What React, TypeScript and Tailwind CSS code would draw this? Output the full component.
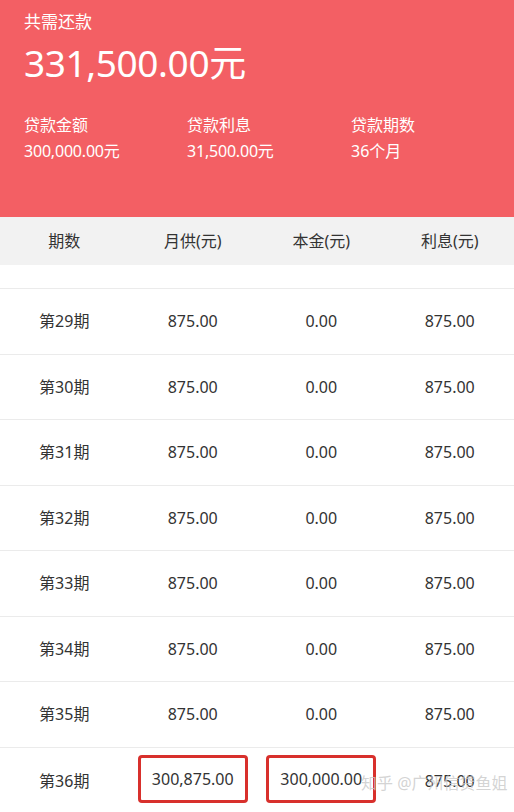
import React from "react";

const rows = [29, 30, 31, 32, 33, 34, 35];

function Cell({ children }: { children: React.ReactNode }) {
  return <div className="flex items-center justify-center">{children}</div>;
}

export default function App() {
  return (
    <div
      className="w-[514px] h-[812px] overflow-hidden bg-white text-[#333]"
      style={{ fontFamily: '"Noto Sans", "Noto Sans CJK SC", sans-serif' }}
    >
      {/* summary header */}
      <div className="h-[217px] bg-[#f35f64] text-white px-6 pt-[9px]">
        <div className="text-[17px] leading-[26px]">共需还款</div>
        <div className="text-[37px] leading-[48px] mt-[4px] tracking-[-0.4px]">331,500.00元</div>
        <div className="grid grid-cols-[163px_164px_1fr] mt-[25px] text-[16px] leading-[26px]">
          <div>
            <div>贷款金额</div>
            <div className="-tracking-[0.2px]">300,000.00元</div>
          </div>
          <div>
            <div>贷款利息</div>
            <div className="-tracking-[0.2px]">31,500.00元</div>
          </div>
          <div>
            <div>贷款期数</div>
            <div>36个月</div>
          </div>
        </div>
      </div>

      {/* table head */}
      <div className="grid grid-cols-4 h-[48px] bg-[#f2f2f2] text-[16px]">
        <Cell>期数</Cell>
        <Cell>月供(元)</Cell>
        <Cell>本金(元)</Cell>
        <Cell>利息(元)</Cell>
      </div>

      <div className="h-[24px] border-b border-[#ebebeb]" />

      {rows.map((n) => (
        <div key={n} className="grid grid-cols-4 h-[65.5px] border-b border-[#ebebeb] text-[16px]">
          <Cell>第{n}期</Cell>
          <Cell>875.00</Cell>
          <Cell>0.00</Cell>
          <Cell>875.00</Cell>
        </div>
      ))}

      <div className="relative grid grid-cols-4 h-[66px] text-[16px]">
        <Cell>第36期</Cell>
        <Cell>
          <span className="-mt-[3px] px-[11px] py-[9px] border-[3px] border-[#d8302c] rounded-[4px]">300,875.00</span>
        </Cell>
        <Cell>
          <span className="-mt-[3px] px-[11px] py-[9px] border-[3px] border-[#d8302c] rounded-[4px]">300,000.00</span>
        </Cell>
        <Cell>875.00</Cell>
        <div className="absolute left-[361px] top-[23px] text-[16px] text-[#c9c9c9]/80 whitespace-nowrap">
          知乎 @广州信贷鱼姐
        </div>
      </div>
    </div>
  );
}
